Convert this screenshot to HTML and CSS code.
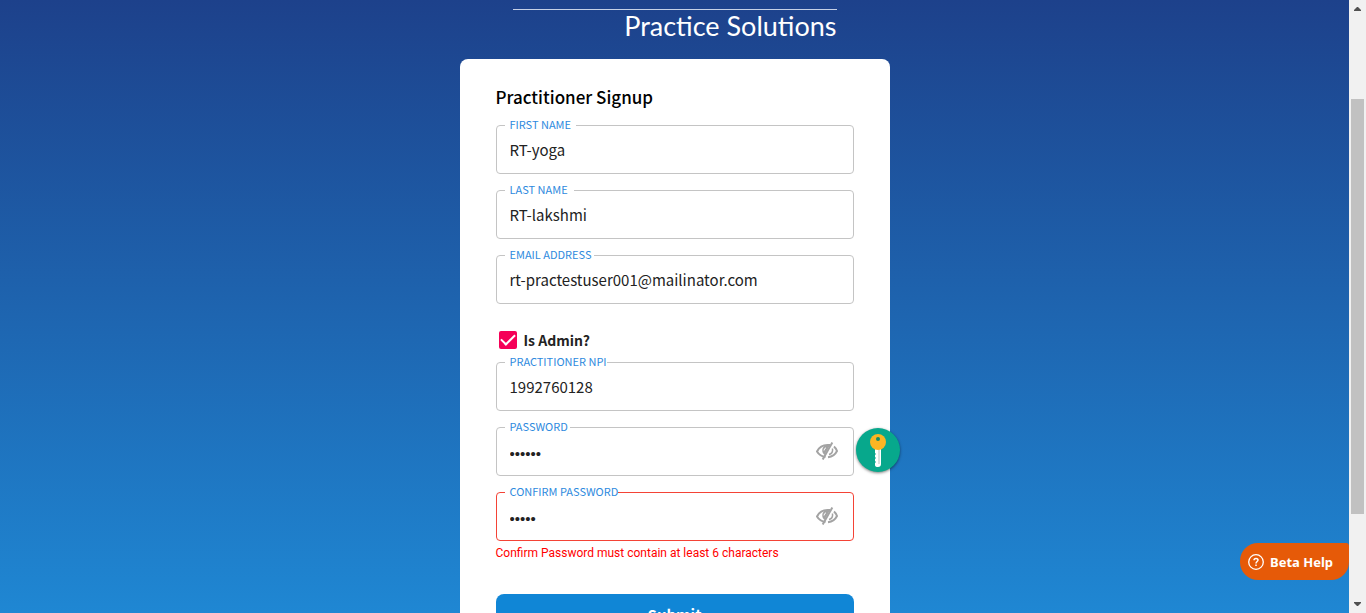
FILE: index.html
```html
<!DOCTYPE html>
<html lang="en">
<head>
<meta charset="utf-8">
<title>Practitioner Signup</title>
<link rel="stylesheet" href="styles.css">
</head>
<body>
<svg class="defs" aria-hidden="true">
  <symbol id="eye-off" viewBox="0 0 22 18">
    <g fill="none" stroke="#a3a3a3" stroke-width="2">
      <path d="M9.500 15C5.500 14.500 2.500 12 1 9.500C3 5.500 7 3 11.500 3H14"/>
      <path d="M18 4.500C19.500 5.800 20.500 7.200 21 9C19.300 12.500 16.200 14.700 12 15.200"/>
      <path d="M16.500 6.500C17 10 15.500 12 13 12.600" stroke-width="1.500"/>
      <path d="M16.300 .5L6.700 17.500"/>
    </g>
    <path fill="#a3a3a3" d="M8 4H13.500L8.500 13C5.700 10.800 5.500 7 8 4Z"/>
    <path d="M8 8.500Q8.200 6.200 10 5.800" fill="none" stroke="#fff"/>
  </symbol>
</svg>
<div class="page">
  <main class="content">
    <header class="brand">Practice Solutions</header>
    <form class="card">
      <h1 class="title">Practitioner Signup</h1>
      <div class="field">
        <label class="label" for="first">FIRST NAME</label>
        <input class="input" id="first" type="text" value="RT-yoga">
      </div>
      <div class="field">
        <label class="label gap-wide" for="last">LAST NAME</label>
        <input class="input" id="last" type="text" value="RT-lakshmi">
      </div>
      <div class="field">
        <label class="label gap-small" for="email">EMAIL ADDRESS</label>
        <input class="input" id="email" type="email" value="rt-practestuser001@mailinator.com">
      </div>
      <label class="admin"><input class="check" type="checkbox" checked>Is Admin?</label>
      <div class="field">
        <label class="label gap-none" for="npi">PRACTITIONER NPI</label>
        <input class="input" id="npi" type="text" value="1992760128">
      </div>
      <div class="field">
        <label class="label gap-small" for="password">PASSWORD</label>
        <input class="input" id="password" type="password" value="secret">
        <button class="reveal" type="button" aria-label="Show password"><svg width="22" height="18"><use href="#eye-off"/></svg></button>
        <button class="key" type="button" aria-label="Password manager">
          <svg width="44" height="44" viewBox="0 0 44 44">
            <path fill="#fff" d="M19 20H25V36Q25 39 22 39Q19 39 19 37V35L20 34L19 33V31L20 30L19 29V27L20 26L19 25Z"/>
            <path d="M23 21V36" stroke="#b5c4bd"/>
            <circle cx="22" cy="14" r="8" fill="#fbb523"/>
            <circle cx="22" cy="11" r="2" fill="#168c66"/>
          </svg>
        </button>
      </div>
      <div class="field invalid">
        <label class="label gap-none" for="confirm">CONFIRM PASSWORD</label>
        <input class="input" id="confirm" type="password" value="secre">
        <button class="reveal" type="button" aria-label="Show password"><svg width="22" height="18"><use href="#eye-off"/></svg></button>
      </div>
      <p class="error">Confirm Password must contain at least 6 characters</p>
      <button class="submit" type="submit">Submit</button>
    </form>
    <button class="help" type="button">
      <svg width="16" height="16" viewBox="0 0 16 16" fill="none" stroke="#fff">
        <circle cx="8" cy="8" r="7.300" stroke-width="1.300"/>
        <path stroke-width="1.500" d="M6 6.300C6 3.800 10 3.800 10 6.100C10 7.600 8 7.500 8 9.400M8 10.500V12"/>
      </svg>
      Beta Help
    </button>
  </main>
  <div class="scrollbar" aria-hidden="true">
    <svg class="arrow" width="17" height="17"><path fill="#505050" d="M5 11V10L8 7H9L12 10V11Z"/></svg>
    <div class="track"><div class="thumb"></div></div>
    <svg class="arrow" width="17" height="17"><path fill="#505050" d="M5 6V7L8 10H9L12 7V6Z"/></svg>
  </div>
</div>
</body>
</html>
```
FILE: styles.css
```css
* { box-sizing: border-box; }
body {
  margin: 0;
  font-family: "Noto Sans CJK SC", "Noto Sans", sans-serif;
  color: #222;
}
.defs { display: none; }
.page { display: flex; height: 100vh; overflow: hidden; }
.content {
  position: relative;
  flex: 1;
  overflow: hidden;
  padding-top: 9px;
  background: linear-gradient(#1d418b, #1f87d3);
}
.brand {
  width: 324px;
  margin: 0 auto;
  border-top: 1px solid #c5d0e6;
  font: 27px/32px Lato, sans-serif;
  height: 50px;
  color: #fff;
  text-align: right;
  white-space: nowrap;
}
.card {
  width: 430px;
  max-width: 100%;
  margin: 0 auto;
  padding: 27px 36px 36px;
  border-radius: 8px;
  background: #fff;
}
.title {
  margin: 0 0 17px;
  font-size: 17px;
  line-height: 22px;
  font-weight: 500;
  color: #000;
}
.field { position: relative; margin-bottom: 16px; }
.label {
  position: absolute;
  top: -9px;
  left: 9px;
  padding: 0 5px;
  background: #fff;
  font-size: 11px;
  line-height: 16px;
  color: #2e8ade;
}
.gap-wide { padding-right: 6px; }
.gap-small { padding-right: 2px; }
.gap-none { padding-right: 0; }
.input {
  display: block;
  width: 100%;
  height: 49px;
  padding: 0 48px 0 13px;
  border: 1px solid #c4c4c4;
  border-radius: 4px;
  background: #fff;
  font-family: inherit;
  font-size: 15px;
  color: #222;
}
.input[type="password"] {
  padding-top: 3px;
  font-family: "Liberation Sans", sans-serif;
}
.invalid .input { border-color: #f44336; }
.admin {
  display: flex;
  align-items: center;
  gap: 7px;
  margin: 27px 0 13px;
  padding-left: 3px;
  font-size: 14px;
  line-height: 18px;
  font-weight: 700;
}
.check {
  appearance: none;
  width: 18px;
  height: 18px;
  margin: 0;
  border-radius: 2px;
  background: #f50057;
  display: grid;
  place-items: center;
}
.check:checked::before {
  content: "";
  width: 12px;
  height: 6px;
  margin-bottom: 4px;
  border: solid #fff;
  border-width: 0 0 2px 2px;
  transform: rotate(-45deg);
}
.reveal {
  position: absolute;
  top: 15px;
  right: 16px;
  padding: 0;
  border: 0;
  background: none;
  line-height: 0;
}
.key {
  position: absolute;
  top: 1px;
  right: -46px;
  padding: 0;
  border: 0;
  border-radius: 50%;
  background: #07a88c;
  box-shadow: 0 1px 3px rgba(0, 0, 0, 0.5);
  line-height: 0;
}
.invalid { margin-bottom: 4px; }
.error {
  margin: 0 0 33px;
  font: 400 12px/16px Roboto, sans-serif;
  color: #f00;
}
.submit {
  display: block;
  width: 100%;
  height: 42px;
  padding: 0;
  border: 0;
  border-radius: 8px;
  background: #1086d6;
  font: 700 15px/20px "Noto Sans CJK SC", sans-serif;
  color: #fff;
}
.help {
  position: absolute;
  right: 0;
  bottom: 33px;
  display: flex;
  align-items: center;
  gap: 6px;
  height: 37px;
  padding: 0 16px 0 8px;
  border: 0;
  border-radius: 18px 3px 18px 18px;
  background: #e65a08;
  font: 700 13px/18px "Noto Sans", sans-serif;
  color: #fff;
}
.scrollbar {
  display: flex;
  flex-direction: column;
  width: 17px;
  background: #f1f1f1;
}
.arrow { flex: none; }
.track { flex: 1; padding: 82px 2px 0; }
.thumb { height: 84%; max-height: 415px; background: #c1c1c1; }
```
